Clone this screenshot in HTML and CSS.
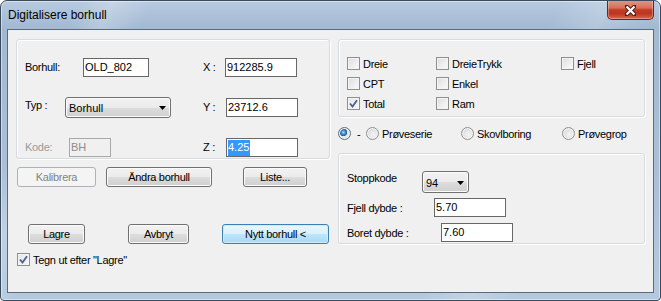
FILE: index.html
```html
<!DOCTYPE html>
<html lang="no">
<head>
    <meta charset="UTF-8">
    <meta name="viewport" content="width=device-width, initial-scale=1.0">
    <title>Digitalisere borhull</title>
    <link rel="stylesheet" href="styles.css">
</head>
<body>
    <div class="window">
        <div class="titlebar">
            <span class="title">Digitalisere borhull</span>
            <button class="close-btn" type="button" aria-label="Lukk">
                <svg width="11" height="11" viewBox="0 0 11 11">
                    <path d="M1.5 1.5l8 8M9.5 1.5l-8 8" stroke="#4a1c14" stroke-width="4" stroke-linecap="round"/>
                    <path d="M1.5 1.5l8 8M9.5 1.5l-8 8" stroke="#fff" stroke-width="2.2"/>
                </svg>
            </button>
        </div>

        <div class="client">
            <!-- left side: position + buttons -->
            <div class="col">
                <div class="group params">
                    <div class="row">
                        <div class="half">
                            <span class="lbl w58">Borhull:</span>
                            <span class="textbox w66">OLD_802</span>
                        </div>
                        <span class="lbl axis">X :</span>
                        <span class="textbox w72">912285.9</span>
                    </div>
                    <div class="row">
                        <div class="half">
                            <span class="lbl w40 raise">Typ :</span>
                            <span class="combo w106">
                                <span>Borhull</span>
                                <svg class="arrow" width="7" height="4" viewBox="0 0 7 4"><polygon points="0,0 7,0 3.5,4" fill="#000"/></svg>
                            </span>
                        </div>
                        <span class="lbl axis wide">Y :</span>
                        <span class="textbox w72">23712.6</span>
                    </div>
                    <div class="row">
                        <div class="half">
                            <span class="lbl w44 disabled">Kode:</span>
                            <span class="textbox w42 disabled">BH</span>
                        </div>
                        <span class="lbl axis wide">Z :</span>
                        <span class="textbox w72"><span class="selected">4.25</span></span>
                    </div>
                </div>

                <div class="btn-row top-actions">
                    <button class="btn" disabled>Kalibrera</button>
                    <button class="btn">Ändra borhull</button>
                    <button class="btn">Liste...</button>
                </div>

                <div class="btn-row main-actions">
                    <button class="btn">Lagre</button>
                    <button class="btn">Avbryt</button>
                    <button class="btn default">Nytt borhull &lt;</button>
                </div>

                <label class="check tegn">
                    <span class="box checked">
                        <svg width="11" height="11" viewBox="0 0 11 11"><path d="M2 5.5l2.5 3L9 2.2" fill="none" stroke="#4b5f92" stroke-width="1.8"/></svg>
                    </span>
                    Tegn ut efter "Lagre"
                </label>
            </div>

            <!-- right side: methods + depths -->
            <div class="col">
                <div class="group methods">
                    <div class="check-grid">
                        <label class="check"><span class="box"></span>Dreie</label>
                        <label class="check"><span class="box"></span>DreieTrykk</label>
                        <label class="check"><span class="box"></span>Fjell</label>
                        <label class="check"><span class="box"></span>CPT</label>
                        <label class="check"><span class="box"></span>Enkel</label>
                        <span></span>
                        <label class="check">
                            <span class="box checked">
                                <svg width="11" height="11" viewBox="0 0 11 11"><path d="M2 5.5l2.5 3L9 2.2" fill="none" stroke="#4b5f92" stroke-width="1.8"/></svg>
                            </span>Total
                        </label>
                        <label class="check"><span class="box"></span>Ram</label>
                        <span></span>
                    </div>
                </div>

                <div class="radio-row">
                    <label class="radio r1"><span class="dot on"></span><span class="dash">-</span></label>
                    <label class="radio r2"><span class="dot"></span>Prøveserie</label>
                    <label class="radio r3"><span class="dot"></span>Skovlboring</label>
                    <label class="radio"><span class="dot"></span>Prøvegrop</label>
                </div>

                <div class="group depths">
                    <div class="drow top">
                        <span class="lbl w75">Stoppkode</span>
                        <span class="combo w47 tall">
                            <span>94</span>
                            <svg class="arrow" width="7" height="4" viewBox="0 0 7 4"><polygon points="0,0 7,0 3.5,4" fill="#000"/></svg>
                        </span>
                    </div>
                    <div class="drow">
                        <span class="lbl w87">Fjell dybde :</span>
                        <span class="textbox w72">5.70</span>
                    </div>
                    <div class="drow">
                        <span class="lbl w94">Boret dybde :</span>
                        <span class="textbox w72">7.60</span>
                    </div>
                </div>
            </div>
        </div>
    </div>
</body>
</html>
```

FILE: styles.css
```css
* {
    box-sizing: border-box;
}

body {
    margin: 0;
    background-color: #fff;
    color: #000;
    font-family: 'Liberation Sans', Arial, sans-serif;
    font-size: 11px;
    letter-spacing: -0.3px;
}

.window {
    width: 661px;
    height: 301px;
    border: 1px solid #3b4b5e;
    border-radius: 7px 7px 4px 4px;
    background:
        linear-gradient(115deg, transparent 10%, rgba(255, 255, 255, 0.22) 14%, transparent 19%, transparent 70%, rgba(255, 255, 255, 0.18) 76%, transparent 82%),
        linear-gradient(to bottom, #b7cae0 0, #a2b9d2 28px, #abc0d8 60%, #b5c9de 100%);
    box-shadow: inset 0 0 0 1px rgba(255, 255, 255, 0.45);
    display: flex;
    flex-direction: column;
    overflow: hidden;
}

.titlebar {
    height: 28px;
    display: flex;
    align-items: flex-start;
    padding-left: 7px;
}

.title {
    margin-top: 7px;
    font-size: 12px;
    line-height: 14px;
    letter-spacing: 0;
}

.close-btn {
    margin: -1px 6px 0 auto;
    width: 47px;
    height: 20px;
    padding: 0;
    border: 1px solid #6e2417;
    border-top: none;
    border-radius: 0 0 5px 5px;
    background: linear-gradient(to bottom, #e39a88 0%, #d2705a 42%, #c23a23 52%, #bd3621 72%, #d9684f 100%);
    box-shadow: inset 0 0 0 1px rgba(255, 255, 255, 0.3);
    display: flex;
    align-items: center;
    justify-content: center;
}

.close-btn svg {
    margin-top: 1px;
}

.client {
    margin: 0 6px;
    height: 264px;
    border: 1px solid #5a6b80;
    background-color: #f0f0f0;
    padding: 9px 0 0 8px;
    display: grid;
    grid-template-columns: 314px 307px;
    column-gap: 8px;
    align-items: start;
}

.group {
    border: 1px solid #d5dbe0;
    border-radius: 3px;
    box-shadow: inset 1px 1px 0 #fff, 1px 1px 0 #fff;
}

/* left group */
.params {
    height: 120px;
    padding: 17px 0 0 8px;
    display: flex;
    flex-direction: column;
    gap: 20px;
}

.row {
    height: 20px;
    display: flex;
    align-items: center;
}

.half {
    width: 178px;
    display: flex;
    align-items: center;
}

.lbl {
    line-height: 14px;
    white-space: nowrap;
}

.lbl.raise {
    margin-top: -4px;
}

.lbl.disabled {
    color: #9a9a9a;
}

.axis { width: 22px; }
.axis.wide { width: 23px; }

.w40 { width: 40px; }
.w42 { width: 42px; }
.w44 { width: 44px; }
.w47 { width: 47px; }
.w58 { width: 58px; }
.w66 { width: 66px; }
.w72 { width: 72px; }
.w75 { width: 75px; }
.w87 { width: 87px; }
.w94 { width: 94px; }
.w106 { width: 106px; }

.textbox {
    height: 19px;
    border: 1px solid #676767;
    background-color: #fff;
    padding: 1px 1px 0;
    line-height: 15px;
    letter-spacing: 0;
    display: block;
}

.textbox.disabled {
    border-color: #a8a8a8;
    background-color: #f0f0f0;
    color: #8d8d8d;
}

.selected {
    display: inline-block;
    background-color: #3399ff;
    color: #fff;
    height: 16px;
    line-height: 15px;
    margin-top: -1px;
    padding-right: 1px;
}

.combo {
    height: 21px;
    border: 1px solid #707070;
    border-radius: 3px;
    background: linear-gradient(to bottom, #f2f2f2 0%, #ebebeb 50%, #dddddd 51%, #cfcfcf 100%);
    box-shadow: inset 0 0 0 1px #fcfcfc;
    padding: 0 4px 0 3px;
    display: flex;
    align-items: center;
    justify-content: space-between;
    letter-spacing: 0;
}

.combo.tall {
    height: 22px;
}

.combo span {
    margin-top: 1px;
}

.arrow {
    margin-top: 1px;
}

/* buttons */
.btn-row {
    display: flex;
}

.btn {
    height: 20px;
    padding: 0;
    border: 1px solid #707070;
    border-radius: 3px;
    background: linear-gradient(to bottom, #f2f2f2 0%, #ebebeb 50%, #dddddd 51%, #cfcfcf 100%);
    box-shadow: inset 0 0 0 1px #fcfcfc;
    font-family: 'Liberation Sans', Arial, sans-serif;
    font-size: 11px;
    letter-spacing: -0.3px;
    color: #000;
    line-height: 16px;
}

.btn:disabled {
    border-color: #adb2b5;
    background: #f4f4f4;
    color: #838383;
    box-shadow: none;
}

.btn.default {
    border-color: #3c7fb1;
    background: linear-gradient(to bottom, #eaf6fd 0%, #d9f0fc 50%, #bee6fd 51%, #a7d9f5 100%);
    box-shadow: inset 0 0 0 1px #d0ecfb;
}

.top-actions {
    margin-top: 8px;
    padding-left: 1px;
}

.top-actions .btn:nth-child(1) { width: 79px; }
.top-actions .btn:nth-child(2) { width: 106px; margin-left: 10px; }
.top-actions .btn:nth-child(3) { width: 64px; margin-left: 31px; }

.main-actions {
    margin-top: 37px;
    padding-left: 12px;
}

.main-actions .btn:nth-child(1) { width: 57px; }
.main-actions .btn:nth-child(2) { width: 61px; margin-left: 43px; }
.main-actions .btn:nth-child(3) { width: 107px; margin-left: 33px; }

/* check boxes and radios */
.check,
.radio {
    display: flex;
    align-items: center;
    height: 13px;
    line-height: 14px;
    white-space: nowrap;
}

.box {
    width: 13px;
    height: 13px;
    flex: none;
    margin-right: 3px;
    border: 1px solid #8e8f8f;
    background: linear-gradient(135deg, #dcdcdc 0%, #f0f0f0 60%, #fbfbfb 100%);
    box-shadow: inset 0 0 0 1px #f4f4f4;
}

.box.checked {
    background: linear-gradient(135deg, #e6e6e6 0%, #f7f7f7 100%);
}

.box svg {
    display: block;
}

.tegn {
    margin-top: 9px;
    margin-left: 1px;
}

.methods {
    height: 78px;
    padding: 17px 0 0 8px;
}

.check-grid {
    display: grid;
    grid-template-columns: 89px 125px auto;
    grid-auto-rows: 13px;
    row-gap: 7px;
}

.radio-row {
    margin-top: 10px;
    display: flex;
}

.r1 { width: 28px; }
.r2 { width: 95px; }
.r3 { width: 101px; }

.dot {
    width: 13px;
    height: 13px;
    flex: none;
    margin-right: 3px;
    border: 1px solid #8e8f8f;
    border-radius: 50%;
    background: radial-gradient(circle at 60% 60%, #f4f4f4 0%, #dcdcdc 70%, #cfcfcf 100%);
    box-shadow: inset 0 0 0 1px #f6f6f6;
}

.dot.on {
    border-color: #5b6d82;
    background:
        radial-gradient(circle at 40% 40%, #a9e0ff 0, #3e8fd0 2px, #1c5a92 3.5px, transparent 4px),
        radial-gradient(circle, #f2f2f2 0%, #d9d9d9 100%);
}

.dash {
    margin-left: 3px;
}

/* right lower group */
.depths {
    margin-top: 13px;
    height: 91px;
    padding: 17px 0 0 8px;
}

.drow {
    display: flex;
    align-items: center;
    height: 19px;
    margin-top: 6px;
}

.drow.top {
    height: 22px;
    margin-top: 0;
    align-items: flex-start;
}

.drow:nth-child(2) {
    margin-top: 5px;
}
```
